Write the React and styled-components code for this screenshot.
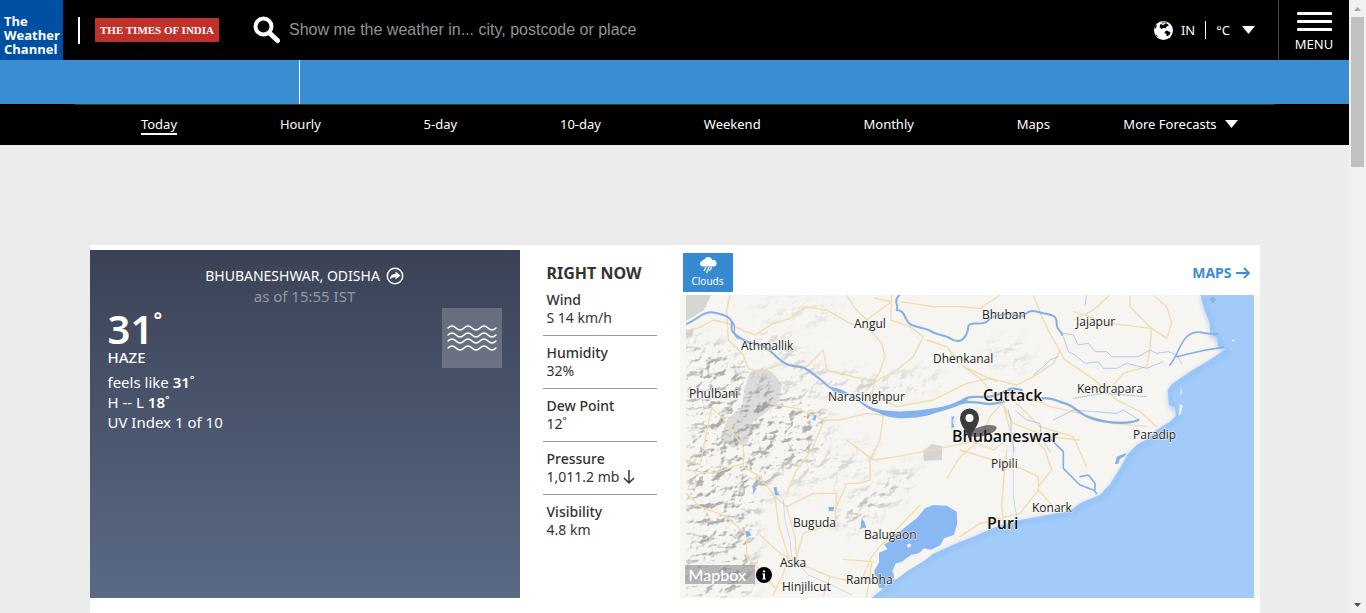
import React from "react";
import styled, { createGlobalStyle, css } from "styled-components";

const ui = `"Noto Sans", "Open Sans", sans-serif`;

const Global = createGlobalStyle`
  * { box-sizing: border-box; }
  body { margin: 0; background: #ececec; color: #333; font-family: ${ui}; font-size: 13px; overflow: hidden; }
  a { color: inherit; text-decoration: none; }
  button { font: inherit; color: inherit; background: none; border: 0; padding: 0; cursor: pointer; }
  h1, h2, p, ul, dl, dd { margin: 0; padding: 0; }
  svg { display: block; flex: none; }
`;

const Shell = styled.div`
  display: flex;
  height: 100vh;
`;
const Page = styled.div`
  flex: 1;
  min-width: 0;
  overflow: hidden;
`;

/* Scroll bar */
const ScrollTrack = styled.div`
  width: 17px;
  background: #f1f1f1;
  display: flex;
  flex-direction: column;
  align-items: center;
  justify-content: space-between;
`;
const ScrollTop = styled.div`
  display: flex;
  flex-direction: column;
  align-items: center;
`;
const ScrollArrow = styled.div`
  height: 17px;
  display: flex;
  align-items: center;
`;
const Thumb = styled.div`
  width: 13px;
  height: 150px;
  background: #c1c1c1;
`;

/* Header */
const Header = styled.header`
  display: flex;
  align-items: center;
  height: 60px;
  background: #000;
  color: #fff;
`;
const Logo = styled.a`
  display: flex;
  align-items: flex-end;
  width: 63px;
  height: 60px;
  padding: 0 0 4px 4px;
  background: #004fa3;
  font-size: 13px;
  line-height: 14px;
  font-family: "Open Sans", sans-serif;
  font-weight: 700;
`;
const LogoRule = styled.span`
  width: 2px;
  height: 27px;
  margin: 0 15px;
  background: #fff;
`;
const Partner = styled.a`
  display: flex;
  align-items: center;
  justify-content: center;
  width: 124px;
  height: 24px;
  background: #c0312b;
  font: 700 11px "Liberation Serif", serif;
`;
const Search = styled.label`
  display: flex;
  align-items: center;
  flex: 1;
  gap: 8px;
  margin-left: 34px;
`;
const SearchInput = styled.input`
  flex: 1;
  height: 36px;
  padding: 0;
  border: 0;
  outline: 0;
  background: transparent;
  color: #fff;
  font: 16px "Liberation Sans", Arial, sans-serif;
  &::placeholder { color: #929292; opacity: 1; }
`;
const Locale = styled.button`
  display: flex;
  align-items: center;
  margin-right: 23px;
  line-height: 18px;
`;
const Region = styled.span`
  padding: 0 10px 0 8px;
  border-right: 1px solid #fff;
`;
const Unit = styled.span`
  padding: 0 12px 0 10px;
`;
const MenuButton = styled.button`
  display: flex;
  flex-direction: column;
  align-items: center;
  gap: 5px;
  width: 71px;
  height: 60px;
  padding-top: 12px;
  border-left: 1px solid #444;
  font-size: 13px;
  line-height: 16px;
`;
const Bar = styled.span`
  width: 35px;
  height: 3px;
  border-radius: 1px;
  background: #fff;
`;

const BlueBand = styled.div`
  height: 44px;
  background: #3b8dd1;
`;
const BandStart = styled.div`
  width: 300px;
  height: 44px;
  border-right: 1px solid #fff;
`;

/* Forecast navigation */
const Nav = styled.nav`
  background: #000;
  color: #fff;
`;
const NavList = styled.ul`
  display: flex;
  max-width: 1200px;
  height: 41px;
  margin: 0 auto;
  padding: 0 15px;
  border-top: 1px solid #333;
  list-style: none;
`;
const NavItem = styled.li`
  flex: ${(p) => (p.$more ? "0 0 158px" : "1 1 auto")};
  display: flex;
  justify-content: center;
  align-items: flex-start;
  padding-top: 10px;
`;
const NavLink = styled.a`
  display: flex;
  align-items: center;
  gap: 8px;
  line-height: 18px;
  border-bottom: 2px solid ${(p) => (p.$active ? "#fff" : "transparent")};
`;

/* Main card */
const Card = styled.main`
  display: flex;
  max-width: 1170px;
  min-height: 500px;
  margin: 100px auto 0;
  padding-top: 5px;
  background: #fff;
`;
const Conditions = styled.section`
  flex: 0 0 430px;
  height: 348px;
  padding: 16px 18px;
  background: linear-gradient(#3b4256, #5a6a85);
  color: #fff;
`;
const Place = styled.h1`
  display: flex;
  align-items: center;
  justify-content: center;
  gap: 6px;
  font-size: 14px;
  line-height: 20px;
  font-weight: 400;
`;
const AsOf = styled.p`
  text-align: center;
  font-size: 15px;
  line-height: 20px;
  color: #9298a5;
`;
const Now = styled.div`
  display: flex;
  justify-content: space-between;
  align-items: flex-start;
  padding-top: 2px;
`;
const Temp = styled.p`
  display: flex;
  align-items: flex-start;
  padding-top: 3px;
  font-size: 40px;
  line-height: 36px;
  font-weight: 600;
`;
const Degree = styled.sup`
  font-size: 30px;
  line-height: 32px;
  font-weight: 500;
`;
const Phrase = styled.p`
  font-size: 15px;
  line-height: 20px;
  font-weight: 500;
`;
const Details = styled.div`
  padding-top: 5px;
  font-size: 15px;
  line-height: 20px;
  b { font-weight: 600; }
`;
const SkyIcon = styled.div`
  display: flex;
  align-items: center;
  justify-content: center;
  width: 60px;
  height: 60px;
  background: rgba(255, 255, 255, 0.2);
`;

const RightNow = styled.section`
  flex: 0 0 114px;
  margin: 0 23px;
  padding-top: 13px;
`;
const RightNowTitle = styled.h2`
  padding-left: 4px;
  font-size: 16px;
  line-height: 20px;
  font-weight: 700;
  white-space: nowrap;
`;
const Readings = styled.dl`
  padding-top: 5px;
`;
const Reading = styled.div`
  height: 53px;
  padding: 8px 0 0 4px;
  font-size: 14px;
  line-height: 18px;
  white-space: nowrap;
  &:not(:last-child) { border-bottom: 1px solid #999; }
  &:first-child { height: 48px; padding-top: 3px; }
  dt { font-weight: 500; }
  dd { display: flex; align-items: center; gap: 4px; }
`;

const MapPanel = styled.section`
  flex: 1;
  min-width: 0;
`;
const MapHeader = styled.div`
  display: flex;
  align-items: center;
  justify-content: space-between;
  height: 45px;
  padding: 0 10px 0 3px;
`;
const LayerButton = styled.button`
  display: flex;
  flex-direction: column;
  align-items: center;
  width: 50px;
  height: 39px;
  padding-top: 4px;
  background: #368ad2;
  color: #fff;
  font-size: 10px;
  line-height: 15px;
`;
const MapsLink = styled.a`
  display: flex;
  align-items: center;
  gap: 4px;
  color: #3b8dd1;
  font-size: 14px;
  font-weight: 700;
`;
const MapCanvas = styled.div`
  position: relative;
  background: #f8f6f1;
`;
const MapSvg = styled.svg`
  width: 100%;
  height: 303px;
`;
const Attribution = styled.div`
  position: absolute;
  left: 5px;
  bottom: 14px;
  display: flex;
  align-items: center;
  gap: 1px;
`;
const Mapbox = styled.a`
  width: 70px;
  height: 19px;
  padding-left: 4px;
  background: rgba(120, 120, 120, 0.5);
  color: #fff;
  font: 500 16px/19px Lato, sans-serif;
`;
const CityText = styled.text`
  font-family: "Open Sans", sans-serif;
  font-size: 12px;
  fill: #222;
  stroke: #fbfaf7;
  stroke-width: 1px;
  paint-order: stroke;
  ${(p) => p.$big && css`
    font-size: 16px;
    font-weight: 600;
    fill: #111;
  `}
`;

const Caret = () => (
  <svg width="13" height="8" viewBox="0 0 13 8"><path d="M0 0h13L6.500 8z" fill="#fff" /></svg>
);

const SearchIcon = () => (
  <svg width="28" height="28" viewBox="0 0 28 28" fill="none" stroke="#fff">
    <circle cx="10.500" cy="10.500" r="8" strokeWidth="4" />
    <path d="M16.500 17l8 7.500" strokeWidth="5" strokeLinecap="round" />
  </svg>
);

const Globe = () => (
  <svg width="19" height="19" viewBox="0 0 19 19">
    <circle cx="9.500" cy="9.500" r="9.500" fill="#fff" />
    <path d="M7 1l4-.7 3 1.200-2 1.500-2-1-1.500 1z" fill="#888" />
    <path d="M6.500 3l3 1 2-1.500 2 .5 1.500 1.500-2 .8-1.500 2-2.500-.3-1.500 1.300-2-2.500zM11 10.500l2-1 3.500 2-.8 2-2 1.500-1 .5-.3-2.500-1.900-1zM1.200 4.500l1.500-.8-.5 3L.5 8z" fill="#000" />
    <path d="M1 13l2 1 1.500 2.500L3 16z" fill="#555" />
  </svg>
);

const cities = [
  ["Angul", 174, 33], ["Bhuban", 302, 24], ["Jajapur", 396, 31], ["Athmallik", 61, 55],
  ["Dhenkanal", 253, 68], ["Phulbani", 9, 103], ["Narasinghpur", 148, 106],
  ["Kendrapara", 397, 98], ["Paradip", 453, 144], ["Pipili", 311, 173], ["Konark", 352, 217],
  ["Buguda", 113, 232], ["Balugaon", 184, 244], ["Aska", 100, 272], ["Rambha", 166, 289],
  ["Hinjilicut", 102, 296],
];
const bigCities = [["Cuttack", 303, 106], ["Bhubaneswar", 272, 147], ["Puri", 307, 234]];

const roads = [
  "M18 125 60 112 100 90 145 100 190 122 225 135 280 100 330 85 375 50 440 60 510 100 570 120 605 160 615 200 600 245 580 275 500 255 440 240 430 180 380 230 310 220 240 245 205 235 190 195 145 150 140 60 150 15",
  "M500 15 525 55 560 90 600 60 635 35 585 25 M635 15 632 90 690 110 730 140 700 200 650 240 585 275 575 310 650 350 760 330 860 280 930 265 1010 285 1060 260 1120 220 1140 180",
  "M660 35 760 50 840 50 900 55 960 15 M1060 15 1085 80 1110 130 1138 180 1150 205 1200 240 1250 275 1310 330 1380 365 1430 410 M1180 90 1240 60 1290 15 M1350 15 1350 50 1415 115 1410 175 1400 230 1330 250 1300 285 M1415 115 1460 145 1475 100 1460 50 1420 15 M1415 115 1290 100 1180 65",
  "M740 150 800 170 850 230 900 265 930 300 970 345 990 420 M850 230 950 275 M1000 300 930 380 900 450 840 500 800 565 M970 345 1000 400 1100 440 1200 450 M1010 340 1080 410 1180 440 1220 530 M1000 300 1110 350 1200 370 1300 400 1400 410",
  "M18 510 60 525 95 350 95 355 130 385 160 430 190 470 190 530 240 560 285 620 M290 345 350 355 430 390 480 390 560 370 610 375 600 450 570 510 570 570 540 580 500 580 470 650 M430 395 400 470 380 500 350 540 320 610 M500 450 580 510 650 500 780 475 880 455 940 480 980 450",
  "M18 610 60 650 140 680 200 735 200 800 250 850 290 900 M285 620 295 700 325 800 310 850 280 915 M320 650 400 610 470 610 465 700 370 730 350 800 M285 620 320 650 345 740 350 810 M240 735 300 790 380 830 450 860 540 880 575 800 600 770 720 645 M490 808 580 815 M450 860 430 920 M575 820 560 920",
  "M840 740 900 700 970 690 965 650 970 580 980 480 M840 480 940 510 1010 530 1075 560 1075 600 1020 670 900 700 M1075 590 1115 540 1095 480 1050 430 M1075 600 1120 650 M18 540 100 550 190 520",
];
const rivers = [
  ["M18 102C45 95 70 60 105 68S150 82 155 95s-10 20 10 38 40 25 75 32 55 58 100 63 40 10 70 32 25 25 45 35", 6],
  ["M155 95c20 10-5 35 20 50", 4],
  ["M850 330c20-20 60 0 100-15s40-25 75-15M840 340c60-15 65 15 130-5", 7],
  ["M1085 325c35-5 45 10 70 15s40 32 80 45 105 20 140 5", 7],
  ["M658 15c-20 20 0 30-8 45 30 0 20 35 45 45s45 10 60 20 40 10 55 20 35 15 48-10 0-25 12-32 40 5 55-12 35-15 60-20 30 20 50 2 30-8 55-3 40 5 40 30 15 20 17 35", 6],
  ["M1150 130l30 5 15 30 30-5 20 25 35 0 15 15 80 0 35-20 20 10 35-5 25 10 15 25M1150 140l15 45 20 10 30 25 40-5 15 20 40 0 30-15 60 15 50-20", 3],
  ["M1470 225c25-30 30-75 60-92s50 5 85-2M1490 200c50-10 70-20 140-28", 5],
  ["M985 360l8 35 0 50 10 40M1010 365l30 25 40 10 5 45 25 40M1120 390l60-30 130 10 20-10 40 25M1180 325l90-15 130 10", 3],
  ["M1115 450l35 35 0 50 20 20 30 30 40 15 10 10M1200 560l25-5 20 25 0 20", 5],
  ["M1060 255l30-25 20-20 25-10M1220 15l-5 30", 3],
  ["M310 630l5 60 15 60 5 50 50 55 70 30 60 30M1000 430l0 190 10 60", 2],
];

const coast = "M1562 15 1572 55 1590 100 1590 130 1612 145 1614 168 1638 178 1580 215 1530 245 1475 283 1463 300 1467 345 1485 352 1488 378 1470 395 1430 420 1400 448 1370 465 1345 490 1320 535 1292 580 1260 615 1200 640 1170 663 1090 677 1010 692 940 714 880 740 840 755 740 800 660 850 610 895 575 924";

const RegionMap = () => (
  <MapSvg viewBox="0 0 580 303" preserveAspectRatio="xMidYMid slice" role="img" aria-label="Map of Odisha">
    <defs>
      <filter id="relief" x="0" y="0" width="100%" height="100%" colorInterpolationFilters="sRGB">
        <feTurbulence type="fractalNoise" baseFrequency="0.07 0.09" numOctaves="4" seed="8" result="n" />
        <feColorMatrix in="n" values="0 0 0 0 1  0 0 0 0 1  0 0 0 0 1  1 0 0 0 0" />
        <feDiffuseLighting surfaceScale="8" lightingColor="#fff">
          <feDistantLight azimuth="225" elevation="45" />
        </feDiffuseLighting>
        <feColorMatrix values="0 0 0 0 .5  0 0 0 0 .5  0 0 0 0 .5  -1.100 0 0 0 .62" />
      </filter>
      <filter id="soften"><feGaussianBlur stdDeviation="9" /></filter>
      <filter id="shore"><feGaussianBlur stdDeviation="8" /></filter>
      <mask id="hills">
        <g filter="url(#soften)" fill="#fff">
          <path d="M6 45 40 50 70 80 100 90 150 120 135 160 90 180 75 220 70 303 6 303z" />
          <path d="M75 35 100 40 130 75 200 85 260 75 255 88 190 100 120 90z" opacity=".7" />
          <path d="M150 225 190 195 240 165 220 200 170 235z" opacity=".9" />
          <path d="M80 150 200 150 180 190 80 200z" opacity=".35" />
          <path d="M310 50 350 50 345 70 310 68z" opacity=".5" />
          <path d="M75 5 160 10 150 30 80 20z" opacity=".35" />
        </g>
      </mask>
      <clipPath id="tiles"><rect x="6" width="568" height="303" /></clipPath>
    </defs>
    <g clipPath="url(#tiles)">
      <rect x="6" width="568" height="303" fill="#f7f5f1" />
      <g fill="#d5d5d3">
        <path d="M6 0H31L24 15 6 26zM6 35l8-2-2 9-6 2z" />
        <path d="M70 77l12-4 10 4 10 12-3 18-10 8-16 12-5 20-15 6-13-10 8-20 14-10 2-18z" opacity=".8" />
        <path d="M243 156l9-7 10 2 0 14-18 1z" />
      </g>
      <rect x="6" width="380" height="303" filter="url(#relief)" mask="url(#hills)" />
      <g transform="scale(.33333) translate(0 -15)" strokeLinejoin="round" strokeLinecap="round">
        <g fill="none" stroke="#f0dcae" strokeWidth="4">
          {roads.map((d) => <path key={d} d={d} />)}
        </g>
        <path d={`${coast}H1722V15z`} fill="#a2cbf9" />
        <path d={coast} transform="translate(6 7)" fill="none" stroke="#8dbbf3" strokeWidth="8" filter="url(#shore)" />
        <path d="M735 655l25-10 40 2 30 18 2 35-10 35-30 10-10 20-30 15-20-5-15 15-25 5-20 20-25 5-10 25 10 15-20 10-15 25-15-2-10-30-5-20 15-25 0-30 25-10-10-15 20-10 10-20 20-10 25-20 25-20z" fill="#8ab8f2" />
        <path d="M640 850l20-30 25-20 20 8 15-18 30-12 15 8-30 25-50 30-40 30zM680 765l10-5 4 8-10 5z" fill="#f7f5f1" />
        <path d="M450 292c30 0 50 15 80 33s35 28 75 35 100 5 155-5 60-15 95-32l10 8c-40 25-75 30-110 42s-120 20-160-5c-50-15-50-35-85-50s-50-5-60-26z" fill="#83b2ef" />
        <g fill="none" stroke="#83aee8">
          {rivers.map(([d, w]) => <path key={d} d={d} strokeWidth={w} opacity={w < 4 ? 0.6 : 1} />)}
        </g>
        <g fill="#83b2ef">
          <path d="M280 592l10 0 2 14 8 10-14 0zM196 722l12 2 6 12-14 6zM445 650l18 2-4 12-12-2zM545 685l8 10 6 18-12 0-6 5zM402 376l8-2-4 18-8-2zM220 590l10 4-12 20zM1310 500l30-12-5 10-15 8-5 15-10 2z" />
          <path d="M1500 342l8 5-8 30-4-5zM1502 290l4 15-4 15zM1655 148l10 2-6 6z" fill="#f1f5f8" />
          <path d="M1588 28l10-8 10 8-10 12z" />
          <path d="M815 380l8 0-6 15 6 15-8 5zM820 395l15-15" stroke="#83b2ef" />
        </g>
      </g>
    </g>
    {cities.map(([name, x, y]) => <CityText key={name} x={x} y={y}>{name}</CityText>)}
    {bigCities.map(([name, x, y]) => <CityText key={name} $big x={x} y={y}>{name}</CityText>)}
    <ellipse cx="303" cy="136" rx="14" ry="5" transform="rotate(-14 303 136)" fill="#222" opacity=".6" />
    <path d="M289.500 146C287 135 280 131 280 123a9.500 9.500 0 0 1 19 0c0 8-7 12-9.500 23z" fill="#3b3b3b" />
    <circle cx="289.500" cy="123" r="4" fill="#fff" />
  </MapSvg>
);

const navItems = ["Today", "Hourly", "5-day", "10-day", "Weekend", "Monthly", "Maps"];
const readings = [
  ["Wind", "S 14 km/h"], ["Humidity", "32%"], ["Dew Point", "12˚"],
  ["Pressure", "1,011.2 mb"], ["Visibility", "4.8 km"],
];

export default function App() {
  return (
    <>
      <Global />
      <Shell>
        <Page>
          <Header>
            <Logo href="#">The<br />Weather<br />Channel</Logo>
            <LogoRule />
            <Partner href="#">THE TIMES OF INDIA</Partner>
            <Search>
              <SearchIcon />
              <SearchInput aria-label="Search location" placeholder="Show me the weather in... city, postcode or place" />
            </Search>
            <Locale>
              <Globe />
              <Region>IN</Region>
              <Unit>°C</Unit>
              <Caret />
            </Locale>
            <MenuButton>
              <Bar /><Bar /><Bar />
              MENU
            </MenuButton>
          </Header>
          <BlueBand><BandStart /></BlueBand>
          <Nav>
            <NavList>
              {navItems.map((t, i) => (
                <NavItem key={t}><NavLink href="#" $active={i === 0}>{t}</NavLink></NavItem>
              ))}
              <NavItem $more><NavLink href="#">More Forecasts <Caret /></NavLink></NavItem>
            </NavList>
          </Nav>
          <Card>
            <Conditions>
              <Place>
                BHUBANESHWAR, ODISHA
                <svg width="18" height="18" viewBox="0 0 18 18">
                  <circle cx="9" cy="9" r="7.700" fill="none" stroke="#fff" strokeWidth="1.500" />
                  <path d="M9.500 4.500L14.500 8.500l-5 4V10.300C7 10.200 5.500 10.800 3.800 12.500 4 9 6 7 9.500 6.800z" fill="#fff" />
                </svg>
              </Place>
              <AsOf>as of 15:55 IST</AsOf>
              <Now>
                <div>
                  <Temp>31<Degree>˚</Degree></Temp>
                  <Phrase>HAZE</Phrase>
                  <Details>
                    <p>feels like <b>31˚</b></p>
                    <p>H -- L <b>18˚</b></p>
                    <p>UV Index 1 of 10</p>
                  </Details>
                </div>
                <SkyIcon>
                  <svg width="52" height="28" viewBox="0 0 52 28" fill="none" stroke="#fff" strokeWidth="1.500" strokeLinecap="round">
                    {[4, 11, 17, 24].map((y) => (
                      <path key={y} d={`M2 ${y}q4-4 8 0t8 0 8 0 8 0 8 0 8 0`} />
                    ))}
                  </svg>
                </SkyIcon>
              </Now>
            </Conditions>
            <RightNow>
              <RightNowTitle>RIGHT NOW</RightNowTitle>
              <Readings>
                {readings.map(([k, v]) => (
                  <Reading key={k}>
                    <dt>{k}</dt>
                    <dd>
                      {v}
                      {k === "Pressure" && (
                        <svg width="12" height="16" viewBox="0 0 12 16" fill="none" stroke="#333" strokeWidth="1.500">
                          <path d="M6 1v13M1 9l5 5 5-5" />
                        </svg>
                      )}
                    </dd>
                  </Reading>
                ))}
              </Readings>
            </RightNow>
            <MapPanel>
              <MapHeader>
                <LayerButton>
                  <svg width="18" height="17" viewBox="0 0 18 17">
                    <path d="M3 9.500a3 3 0 0 1-.3-5.500A2.800 2.800 0 0 1 5.500 2.500 4.200 4.200 0 0 1 13.300 3 3.300 3.300 0 0 1 15 9.500z" fill="#fff" />
                    <path d="M7 10l-2 4M10 10l-2.500 6M12.500 10l-2 4" stroke="#fff" strokeWidth="1.300" />
                  </svg>
                  Clouds
                </LayerButton>
                <MapsLink href="#">
                  MAPS
                  <svg width="14" height="12" viewBox="0 0 14 12" fill="none" stroke="#3b8dd1" strokeWidth="1.800">
                    <path d="M0 6h12.500M8 1l5 5-5 5" />
                  </svg>
                </MapsLink>
              </MapHeader>
              <MapCanvas>
                <RegionMap />
                <Attribution>
                  <Mapbox href="#">Mapbox</Mapbox>
                  <svg width="16" height="16" viewBox="0 0 16 16">
                    <circle cx="8" cy="8" r="8" fill="#000" />
                    <path d="M6.300 6.500h2.700v5h1v1H6.300v-1h.8V7.500h-.8zM7 3.500h2v1.800H7z" fill="#fff" />
                  </svg>
                </Attribution>
              </MapCanvas>
            </MapPanel>
          </Card>
        </Page>
        <ScrollTrack>
          <ScrollTop>
            <ScrollArrow><svg width="7" height="4" viewBox="0 0 7 4"><path d="M0 4h7L3.500 0z" fill="#a3a3a3" /></svg></ScrollArrow>
            <Thumb />
          </ScrollTop>
          <ScrollArrow><svg width="7" height="4" viewBox="0 0 7 4"><path d="M0 0h7L3.500 4z" fill="#505050" /></svg></ScrollArrow>
        </ScrollTrack>
      </Shell>
    </>
  );
}
